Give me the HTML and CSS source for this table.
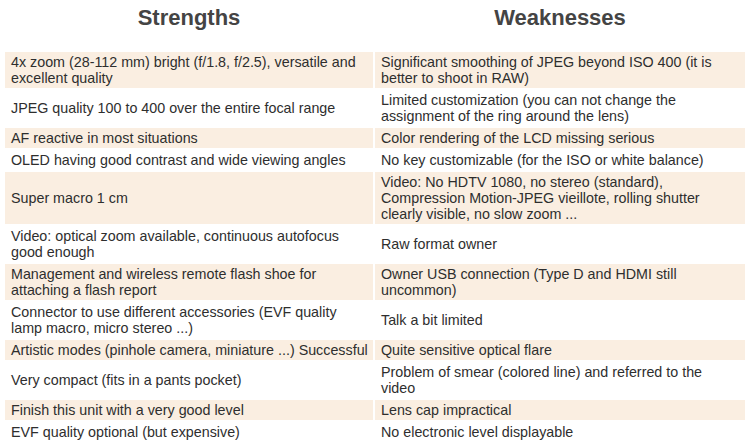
FILE: index.html
```html
<!DOCTYPE html>
<html>
<head>
<meta charset="utf-8">
<link rel="stylesheet" href="styles.css">
</head>
<body>
<table class="sw">
  <thead>
    <tr><th>Strengths</th><th>Weaknesses</th></tr>
  </thead>
  <tbody>
    <tr class="alt"><td>4x zoom (28-112 mm) bright (f/1.8, f/2.5), versatile and excellent quality</td><td>Significant smoothing of JPEG beyond ISO 400 (it is better to shoot in RAW)</td></tr>
    <tr><td>JPEG quality 100 to 400 over the entire focal range</td><td>Limited customization (you can not change the assignment of the ring around the lens)</td></tr>
    <tr class="alt"><td>AF reactive in most situations</td><td>Color rendering of the LCD missing serious</td></tr>
    <tr><td>OLED having good contrast and wide viewing angles</td><td>No key customizable (for the ISO or white balance)</td></tr>
    <tr class="alt"><td>Super macro 1 cm</td><td>Video: No HDTV 1080, no stereo (standard), Compression Motion-JPEG vieillote, rolling shutter clearly visible, no slow zoom ...</td></tr>
    <tr><td>Video: optical zoom available, continuous autofocus good enough</td><td>Raw format owner</td></tr>
    <tr class="alt"><td>Management and wireless remote flash shoe for attaching a flash report</td><td>Owner USB connection (Type D and HDMI still uncommon)</td></tr>
    <tr><td>Connector to use different accessories (EVF quality lamp macro, micro stereo ...)</td><td>Talk a bit limited</td></tr>
    <tr class="alt"><td class="nw">Artistic modes (pinhole camera, miniature ...) Successful</td><td>Quite sensitive optical flare</td></tr>
    <tr><td>Very compact (fits in a pants pocket)</td><td>Problem of smear (colored line) and referred to the video</td></tr>
    <tr class="alt"><td>Finish this unit with a very good level</td><td>Lens cap impractical</td></tr>
    <tr><td>EVF quality optional (but expensive)</td><td>No electronic level displayable</td></tr>
  </tbody>
</table>
</body>
</html>
```

FILE: styles.css
```css
html, body {
  margin: 0;
  padding: 0;
  background: #fff;
}
body {
  padding: 3px;
  font-family: "Liberation Sans", Arial, Helvetica, sans-serif;
  color: #2e2e2e;
}
.sw {
  border-collapse: separate;
  border-spacing: 2px;
  width: 744px;
  margin: -2px 0 0 0;
  table-layout: fixed;
}
.sw th {
  font-size: 22px;
  font-weight: bold;
  color: #444;
  text-align: center;
  vertical-align: top;
  padding: 2px 6px 20px;
  line-height: 25px;
}
.sw th:first-child, .sw td:first-child { width: 356px; }
.sw td {
  font-size: 14.3px;
  line-height: 16px;
  padding: 2px 6px 2px 6px;
  vertical-align: middle;
  text-align: left;
}
.sw tr.alt td { background: #faeee1; }
.sw td.nw { white-space: nowrap; }
```
